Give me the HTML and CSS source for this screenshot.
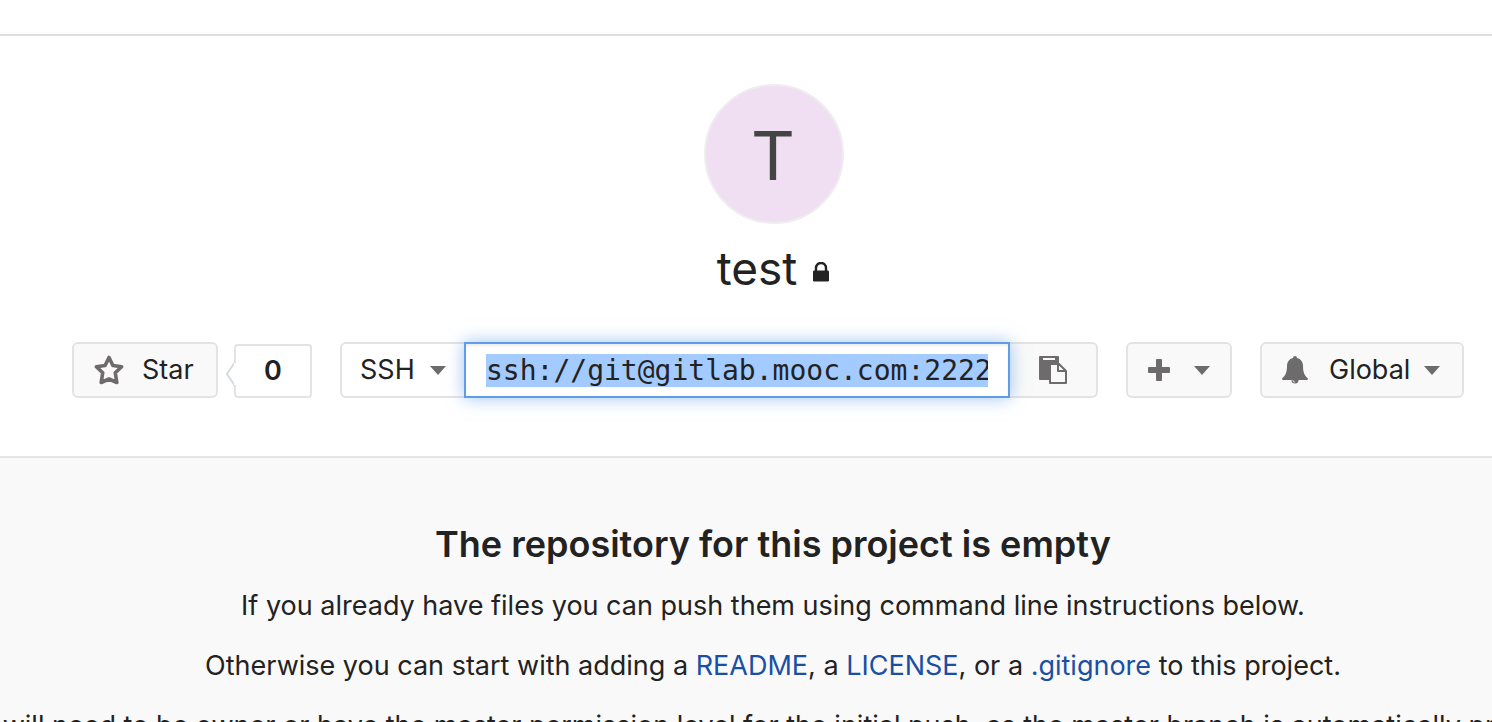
FILE: index.html
```html
<!DOCTYPE html>
<html lang="en">
<head>
<meta charset="utf-8">
<title>test</title>
<link rel="stylesheet" href="styles.css">
</head>
<body>
<header class="topbar"></header>
<main>
  <section class="project-home">
    <div class="avatar">T</div>
    <h1 class="project-title">test
      <svg class="lock" viewBox="0 0 16 20" role="img" aria-label="Private"><path d="M3 9V6a5 5 0 0 1 10 0v3" fill="none" stroke="currentColor" stroke-width="2.4"/><rect y="8.500" width="16" height="11" rx="1.200" fill="currentColor"/></svg>
    </h1>
    <div class="toolbar">
      <div class="star-group">
        <button class="btn btn-star" type="button">
          <svg class="icon-star" viewBox="0 0 30 30" aria-hidden="true"><path d="M15 2.500l3.900 8 8.700 1.200-6.300 6.100 1.500 9.700L15 24l-7.800 3.500 1.500-9.700-6.300-6.100 8.700-1.200z" fill="none" stroke="currentColor" stroke-width="3.600" stroke-linejoin="round"/></svg>
          <span>Star</span>
        </button>
        <span class="count">0<svg class="count-arrow" viewBox="0 0 10 26" aria-hidden="true"><path d="M9 1L1 13l8 12" fill="#fff" stroke="#d5dae0" stroke-width="2"/><path d="M9 2v22" stroke="#fff" stroke-width="2"/></svg></span>
      </div>
      <div class="clone-group">
        <button class="btn btn-protocol" type="button">SSH <span class="caret"></span></button>
        <input class="clone-url" type="text" aria-label="Project clone URL" spellcheck="false" readonly value="ssh://git@gitlab.mooc.com:2222/root/test.git">
        <button class="btn btn-copy" type="button" aria-label="Copy URL to clipboard">
          <svg class="icon-copy" viewBox="0 0 28 28" aria-hidden="true"><path d="M1 0h18a1 1 0 0 1 1 1v23H1a1 1 0 0 1-1-1V1a1 1 0 0 1 1-1z" fill="currentColor"/><path d="M4 3h12" stroke="#f9f9f9" stroke-width="2"/><path d="M11 8h9l7 7v12H11zM19 8v7h8" fill="#f9f9f9" stroke="currentColor" stroke-width="2" stroke-linejoin="round"/></svg>
        </button>
      </div>
      <button class="btn btn-add" type="button" aria-label="Create new">
        <svg class="icon-plus" viewBox="0 0 22 22" aria-hidden="true"><path d="M9 0h4a1 1 0 0 1 1 1v7h7a1 1 0 0 1 1 1v4a1 1 0 0 1-1 1h-7v7a1 1 0 0 1-1 1H9a1 1 0 0 1-1-1v-7H1a1 1 0 0 1-1-1V9a1 1 0 0 1 1-1h7V1a1 1 0 0 1 1-1z" fill="currentColor"/></svg>
        <span class="caret"></span>
      </button>
      <button class="btn btn-notify" type="button">
        <svg class="icon-bell" viewBox="0 0 26 28" aria-hidden="true"><path d="M13 0a2 2 0 0 1 2 2c4 1 6 4 6 8 0 7 2 10 5 12.500 0 1-.8 1.500-1.500 1.500h-23C.8 24 0 23.500 0 22.500 3 20 5 17 5 10c0-4 2-7 6-8a2 2 0 0 1 2-2z" fill="currentColor"/><path d="M9.500 24a3.500 3.500 0 0 0 7 0z" fill="currentColor"/><path d="M10.800 24a2.200 2.200 0 0 0 2.200 2.200" fill="none" stroke="#f9f9f9" stroke-width=".8"/></svg>
        <span>Global</span>
        <span class="caret"></span>
      </button>
    </div>
  </section>
  <section class="empty-repo">
    <h2 class="empty-title">The repository for this project is empty</h2>
    <p class="line">If you already have files you can push them using command line instructions below.</p>
    <p class="line">Otherwise you can start with adding a <a href="#">README</a>, a <a href="#">LICENSE</a>, or a <a href="#">.gitignore</a> to this project.</p>
    <p class="line">You will need to be owner or have the master permission level for the initial push, as the master branch is automatically protected.</p>
  </section>
</main>
<script src="app.js"></script>
</body>
</html>
```
FILE: styles.css
```css
* { box-sizing: border-box; }
html { height: 100%; overflow: hidden; }
body {
  height: 100%;
  margin: 0;
  display: flex;
  flex-direction: column;
  overflow: hidden;
  background: #fff;
  color: #222;
  font: 27px/40px Inter, "Liberation Sans", sans-serif;
}
main { flex: 1; display: flex; flex-direction: column; }
.topbar { height: 36px; flex: none; border-bottom: 2px solid #dfdfdf; }
.project-home {
  display: flex;
  flex-direction: column;
  align-items: center;
  padding: 48px 0 58px 56px;
  border-bottom: 2px solid #e5e5e5;
}
.avatar {
  width: 140px;
  height: 140px;
  padding-right: 2px;
  border: 2px solid #eee;
  border-radius: 50%;
  background: #f0def2;
  color: #444;
  font-size: 68px;
  line-height: 138px;
  text-align: center;
}
.project-title {
  display: flex;
  align-items: center;
  gap: 16px;
  margin: 14px 2px 44px 0;
  font-size: 46px;
  font-weight: 400;
  line-height: 60px;
}
.lock { width: 16px; height: 20px; margin-top: 8px; }
.toolbar { display: flex; gap: 28px; margin-right: 12px; }
.star-group { display: flex; align-items: flex-end; gap: 16px; }
.btn {
  display: flex;
  align-items: center;
  height: 56px;
  padding: 0 20px;
  border: 2px solid #e3e3e3;
  border-radius: 6px;
  background: #f9f9f9;
  color: #222;
  font: inherit;
}
.btn svg { flex: none; color: #6e6b6c; }
.btn-star { width: 146px; gap: 18px; }
.icon-star { width: 30px; height: 30px; }
.count {
  position: relative;
  width: 78px;
  height: 54px;
  border: 2px solid #e3e3e3;
  border-radius: 4px;
  font-size: 27px;
  font-weight: 600;
  line-height: 50px;
  text-align: center;
}
.count-arrow { position: absolute; left: -10px; top: 15px; width: 10px; height: 26px; }
.caret {
  border: 8px solid transparent;
  border-top: 9px solid #6e6b6c;
  border-bottom: 0;
}
.clone-group { display: flex; }
.btn-protocol {
  width: 124px;
  padding: 0 18px;
  justify-content: space-between;
  border-right: 0;
  border-radius: 6px 0 0 6px;
  background: #fff;
}
.clone-url {
  z-index: 1;
  width: 546px;
  height: 56px;
  padding: 0 20px;
  border: 2px solid #5f9de8;
  border-radius: 0;
  outline: 0;
  background: #fff;
  box-shadow: inset 0 2px 2px rgba(0, 0, 0, .08), 0 0 16px rgba(95, 157, 232, .6);
  color: #222;
  font: 28px/32px "DejaVu Sans Mono", monospace;
}
.clone-url::selection { background: #a3cbff; color: #222; }
.btn-copy {
  width: 88px;
  padding-left: 29px;
  border-left: 0;
  border-radius: 0 6px 6px 0;
}
.icon-copy { width: 28px; height: 28px; }
.btn-add { width: 106px; justify-content: space-between; }
.icon-plus { width: 22px; height: 22px; }
.btn-notify { width: 204px; gap: 14px; }
.icon-bell { width: 26px; height: 28px; margin-right: 7px; }
.empty-repo {
  flex: 1;
  display: flex;
  flex-direction: column;
  align-items: center;
  gap: 20px;
  padding: 64px 0 0 54px;
  background: #f9f9f9;
}
.empty-title { margin: 0; font-size: 36px; font-weight: 600; line-height: 44px; }
.line { margin: 0; white-space: nowrap; }
.line a { color: #1b4fa3; text-decoration: none; }
```
FILE: app.js
```js
const url = document.querySelector('.clone-url');
url.focus();
url.select();
```
